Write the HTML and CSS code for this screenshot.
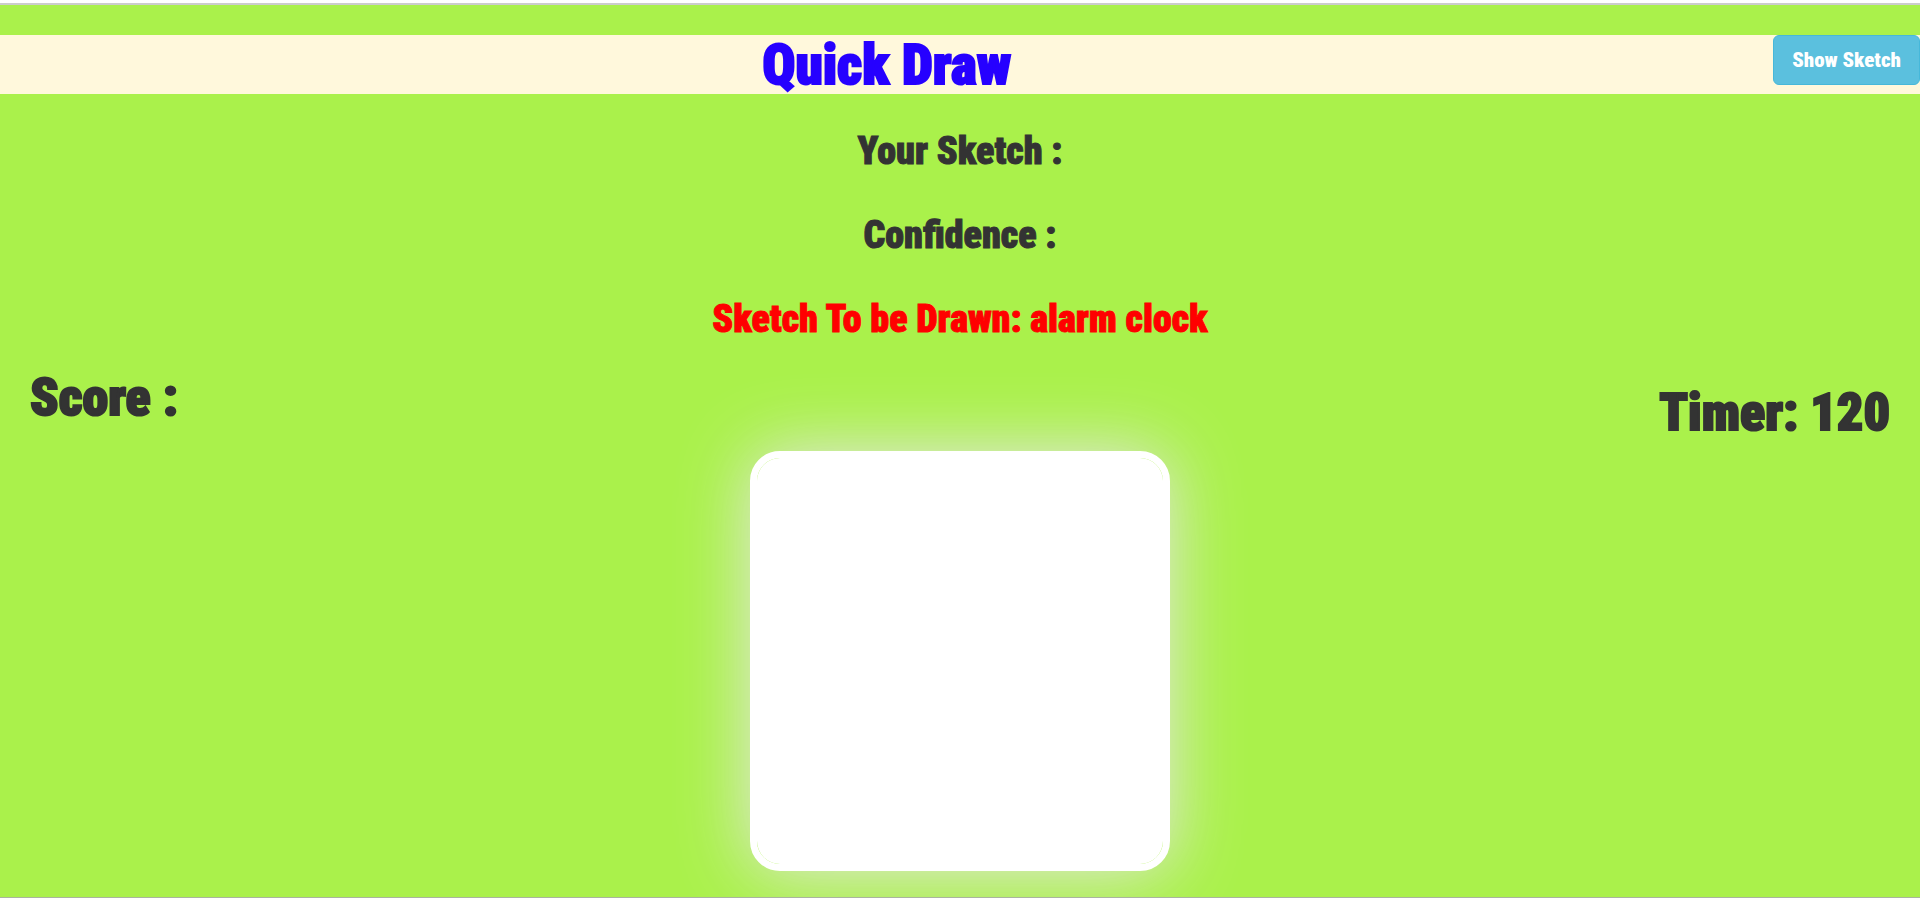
FILE: index.html
```
<!DOCTYPE html>
<html lang="en">
<head>
<meta charset="utf-8">
<title>Quick Draw</title>
<link rel="stylesheet" href="styles.css">
</head>
<body>
<main class="page">
  <header class="banner">
    <h1 class="title">Quick Draw</h1>
    <button class="show-button" type="button">Show Sketch</button>
  </header>
  <section class="status">
    <h2 class="status-line">Your Sketch :</h2>
    <h2 class="status-line">Confidence :</h2>
    <h2 class="status-line target">Sketch To be Drawn: alarm clock</h2>
  </section>
  <section class="board">
    <p class="stat">Score :</p>
    <canvas class="sketch" width="406" height="406" aria-label="Drawing area"></canvas>
    <p class="stat timer">Timer: 120</p>
  </section>
</main>
</body>
</html>
```
FILE: styles.css
```
* {
  box-sizing: border-box;
}

body {
  margin: 0;
  padding-top: 3px;
  background: #fff;
  color: #333;
  font-family: Impact, "Roboto Condensed", "Open Sans Condensed", Roboto, sans-serif;
  font-weight: 900;
}

.page {
  min-height: calc(100vh - 3px);
  padding-top: 30px;
  border-top: 2px solid #ccc;
  border-bottom: 1px solid #aab4a0;
  background: #aaf14b;
  overflow: hidden;
}

.banner {
  display: flex;
  align-items: flex-start;
  background: #fff8dc;
}

.title {
  flex: 1;
  margin: 0;
  color: #2600ff;
  font-size: 55px;
  font-weight: 900;
  line-height: 60px;
  max-height: 59px;
  text-align: center;
  -webkit-text-stroke: 2px;
}

.show-button {
  height: 50px;
  padding: 0 18px;
  border: 1px solid #46b8da;
  border-radius: 6px;
  background: #5bc0de;
  color: #fff;
  font: inherit;
  font-size: 21px;
}

.status {
  display: grid;
  gap: 40px;
  padding-top: 35px;
}

.status-line {
  margin: 0;
  font-size: 38px;
  font-weight: 900;
  line-height: 44px;
  text-align: center;
  -webkit-text-stroke: 1px;
}

.target {
  color: #f00;
}

.board {
  display: grid;
  grid-template-columns: 1fr auto 1fr;
  padding: 27px 30px 26px;
}

.stat {
  margin: 0;
  font-size: 52px;
  line-height: 60px;
  -webkit-text-stroke: 2px;
}

.timer {
  padding-top: 15px;
  text-align: right;
}

.sketch {
  margin-top: 83px;
  border: 7px solid #fff;
  border-radius: 30px;
  background: #fff;
  background-clip: padding-box;
  box-shadow: 0 0 70px #e6e6e6;
}
```
